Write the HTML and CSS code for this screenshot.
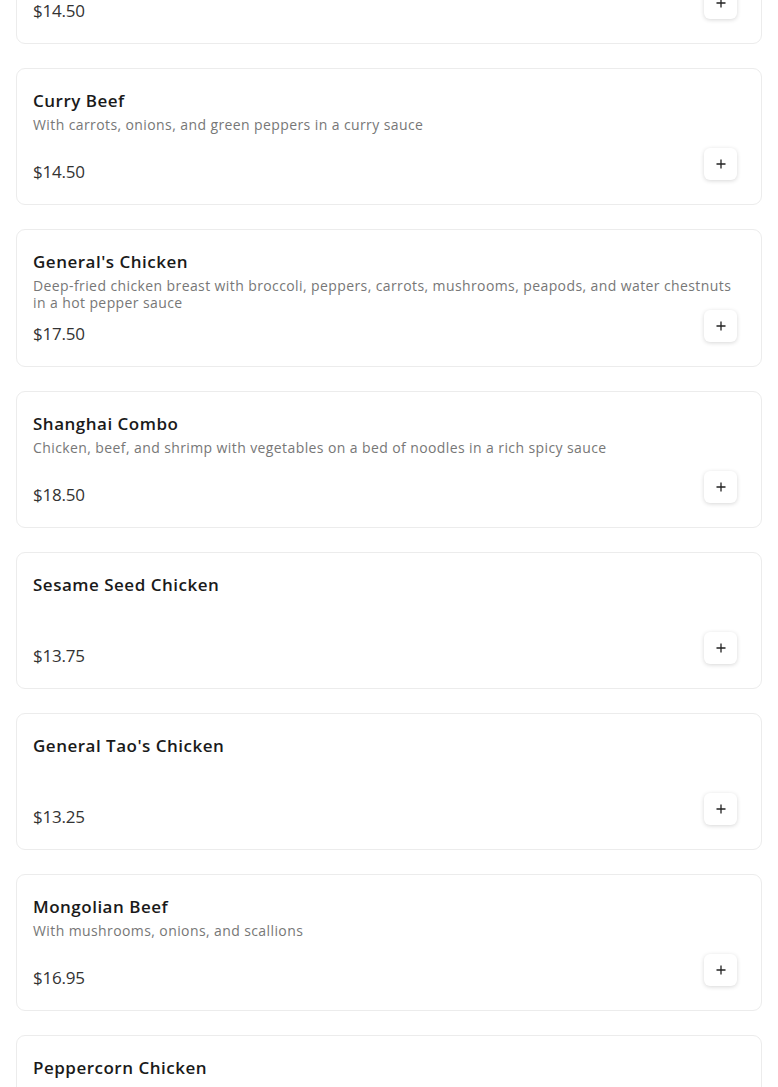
FILE: index.html
```html
<!DOCTYPE html>
<html lang="en">
<head>
<meta charset="utf-8">
<title>Menu</title>
<link rel="stylesheet" href="styles.css">
</head>
<body>
<main class="menu">
  <article class="item">
    <h3 class="item-name">Pepper Steak</h3>
    <p class="item-desc">With onions and green peppers in a brown sauce</p>
    <div class="item-foot"><span class="item-price">$14.50</span><button class="add-btn" aria-label="Add"><svg viewBox="0 0 12 12" width="12" height="12"><path d="M6 1.5v9M1.5 6h9" stroke="#222" stroke-width="1.3" fill="none"/></svg></button></div>
  </article>
  <article class="item">
    <h3 class="item-name">Curry Beef</h3>
    <p class="item-desc">With carrots, onions, and green peppers in a curry sauce</p>
    <div class="item-foot"><span class="item-price">$14.50</span><button class="add-btn" aria-label="Add"><svg viewBox="0 0 12 12" width="12" height="12"><path d="M6 1.5v9M1.5 6h9" stroke="#222" stroke-width="1.3" fill="none"/></svg></button></div>
  </article>
  <article class="item">
    <h3 class="item-name">General's Chicken</h3>
    <p class="item-desc">Deep-fried chicken breast with broccoli, peppers, carrots, mushrooms, peapods, and water chestnuts in a hot pepper sauce</p>
    <div class="item-foot"><span class="item-price">$17.50</span><button class="add-btn" aria-label="Add"><svg viewBox="0 0 12 12" width="12" height="12"><path d="M6 1.5v9M1.5 6h9" stroke="#222" stroke-width="1.3" fill="none"/></svg></button></div>
  </article>
  <article class="item">
    <h3 class="item-name">Shanghai Combo</h3>
    <p class="item-desc">Chicken, beef, and shrimp with vegetables on a bed of noodles in a rich spicy sauce</p>
    <div class="item-foot"><span class="item-price">$18.50</span><button class="add-btn" aria-label="Add"><svg viewBox="0 0 12 12" width="12" height="12"><path d="M6 1.5v9M1.5 6h9" stroke="#222" stroke-width="1.3" fill="none"/></svg></button></div>
  </article>
  <article class="item">
    <h3 class="item-name">Sesame Seed Chicken</h3>
    <p class="item-desc"></p>
    <div class="item-foot"><span class="item-price">$13.75</span><button class="add-btn" aria-label="Add"><svg viewBox="0 0 12 12" width="12" height="12"><path d="M6 1.5v9M1.5 6h9" stroke="#222" stroke-width="1.3" fill="none"/></svg></button></div>
  </article>
  <article class="item">
    <h3 class="item-name">General Tao's Chicken</h3>
    <p class="item-desc"></p>
    <div class="item-foot"><span class="item-price">$13.25</span><button class="add-btn" aria-label="Add"><svg viewBox="0 0 12 12" width="12" height="12"><path d="M6 1.5v9M1.5 6h9" stroke="#222" stroke-width="1.3" fill="none"/></svg></button></div>
  </article>
  <article class="item">
    <h3 class="item-name">Mongolian Beef</h3>
    <p class="item-desc">With mushrooms, onions, and scallions</p>
    <div class="item-foot"><span class="item-price">$16.95</span><button class="add-btn" aria-label="Add"><svg viewBox="0 0 12 12" width="12" height="12"><path d="M6 1.5v9M1.5 6h9" stroke="#222" stroke-width="1.3" fill="none"/></svg></button></div>
  </article>
  <article class="item">
    <h3 class="item-name">Peppercorn Chicken</h3>
    <p class="item-desc"></p>
    <div class="item-foot"><span class="item-price">$15.50</span><button class="add-btn" aria-label="Add"><svg viewBox="0 0 12 12" width="12" height="12"><path d="M6 1.5v9M1.5 6h9" stroke="#222" stroke-width="1.3" fill="none"/></svg></button></div>
  </article>
</main>
</body>
</html>
```

FILE: styles.css
```css
html, body {
  margin: 0;
  padding: 0;
  background: #ffffff;
}
body {
  font-family: "Open Sans", "Noto Sans", "Liberation Sans", sans-serif;
  color: #1c1c1c;
  overflow: hidden;
}
.menu {
  display: flex;
  flex-direction: column;
  gap: 24px;
  padding: 0 16px;
  margin-top: -93px;
}
.item {
  border: 1px solid #ececec;
  border-radius: 9px;
  padding: 20px 16px 20px 16px;
  background: #fff;
}
.item-name {
  margin: 0;
  font-size: 17px;
  line-height: 24px;
  font-weight: 600;
  letter-spacing: 0.5px;
  color: #1a1a1a;
}
.item-desc {
  margin: 4px 0 0 0;
  font-size: 14px;
  line-height: 16.5px;
  min-height: 32px;
  letter-spacing: 0.4px;
  color: #777;
  font-weight: 400;
}
.item-foot {
  display: flex;
  justify-content: space-between;
  align-items: flex-start;
  margin-top: -1px;
  padding-right: 8px;
  height: 36px;
}
.item-price {
  align-self: flex-end;
  font-size: 17px;
  line-height: 24px;
  letter-spacing: -0.2px;
  color: #333;
}
.add-btn {
  width: 33px;
  height: 32px;
  border: none;
  border-radius: 6px;
  background: #fff;
  box-shadow: 0 1px 4px rgba(0, 0, 0, 0.16);
  display: flex;
  align-items: center;
  justify-content: center;
  padding: 0;
}
```
